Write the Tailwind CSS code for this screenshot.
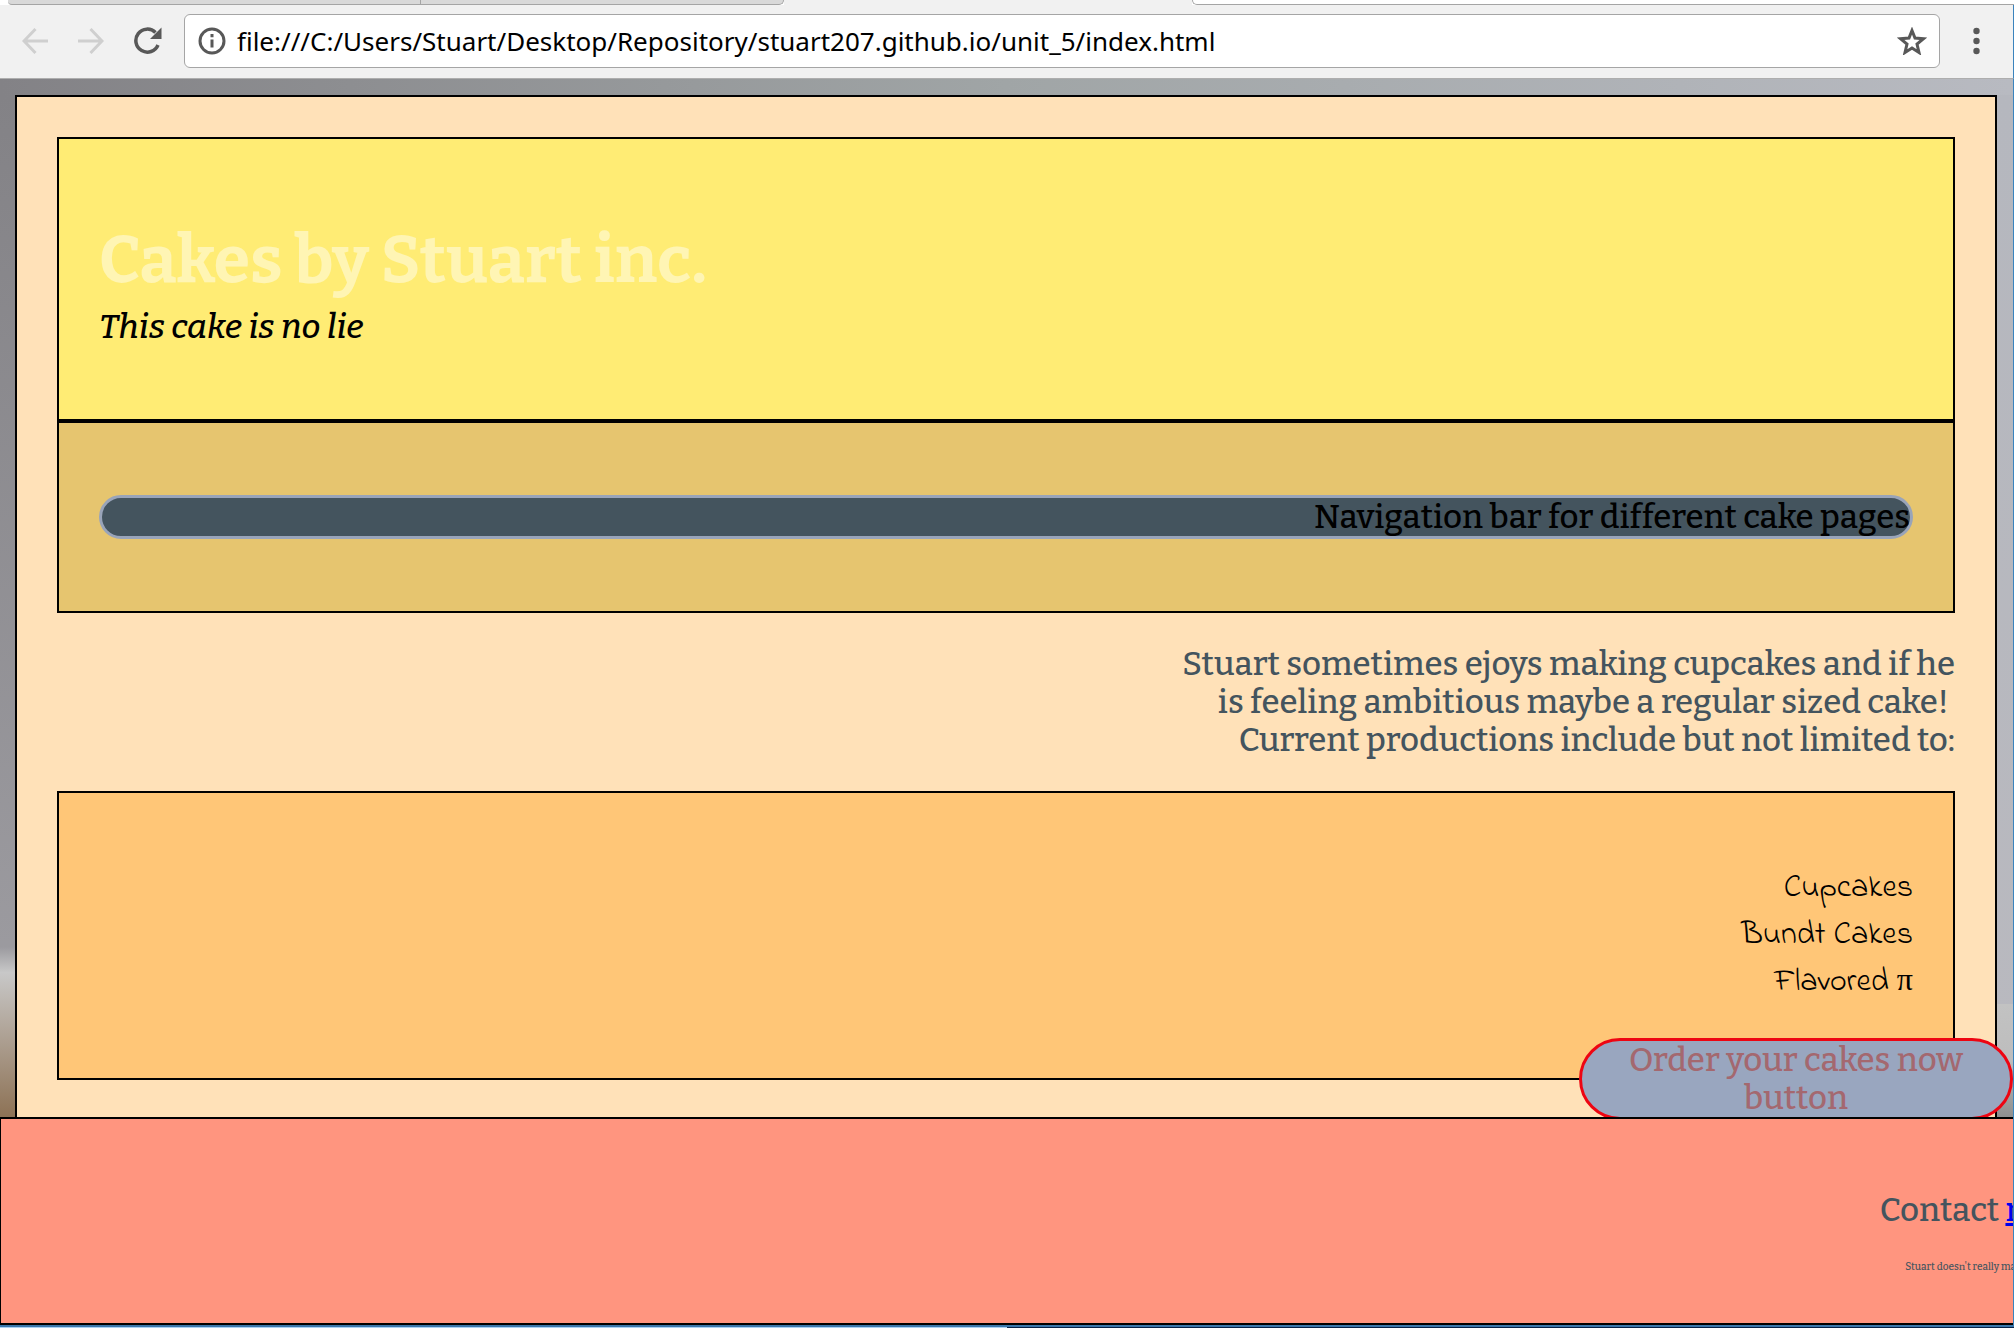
<!DOCTYPE html>
<html lang="en">
<head>
<meta charset="utf-8">
<title>Cakes by Stuart inc.</title>
<script src="https://cdn.jsdelivr.net/npm/@tailwindcss/browser@4"></script>
</head>
<body class="flex h-screen flex-col overflow-hidden bg-[#f1f1f1] font-['Bitter','DejaVu_Serif_Condensed','DejaVu_Serif',serif] text-[33px] leading-[38px] font-medium text-black [font-variant-ligatures:none]">

<!-- Tab strip -->
<div class="flex h-[5px] shrink-0 bg-white pl-2">
  <div class="w-[412px] rounded-bl-sm border-b border-[#a5a5a5] bg-[#d9d9d9]"></div>
  <div class="w-[364px] rounded-br-md border-b border-l border-r border-[#a5a5a5] bg-[#d9d9d9]"></div>
  <div class="w-[408px] bg-[#f1f1f1]"></div>
  <div class="flex-1 rounded-bl-md border-b border-l border-[#a5a5a5] bg-white"></div>
</div>

<!-- Toolbar -->
<header class="flex h-[74px] shrink-0 items-center border-r border-b border-b-[#aeaeae] border-r-[#3a83bd] pb-[2px] pl-[22px] pr-[33px]">
  <button type="button" aria-label="Back" class="mr-[30px]">
    <svg class="h-7 w-[26px]" viewBox="0 0 26 28" fill="none" stroke="#cfcfcf" stroke-width="3"><path d="M26 14H2M13.500 2L2 14l11.500 12"/></svg>
  </button>
  <button type="button" aria-label="Forward" class="mr-[30px]">
    <svg class="h-7 w-[26px]" viewBox="0 0 26 28" fill="none" stroke="#cfcfcf" stroke-width="3"><path d="M0 14h24M12.500 2L24 14 12.500 26"/></svg>
  </button>
  <button type="button" aria-label="Reload" class="mr-[22px]">
    <svg class="h-7 w-7" viewBox="0 0 28 28" fill="none"><path d="M21.500 5.500A11.500 11.500 0 1 0 24 18" stroke="#585858" stroke-width="3.500"/><path d="M27.500 .5V12H16z" fill="#585858"/></svg>
  </button>
  <div class="flex h-[54px] flex-1 items-center rounded-md border border-[#a5a5a5] bg-white pr-3 pl-[13px]">
    <svg class="mr-[11px] h-7 w-7" viewBox="0 0 28 28" fill="none"><circle cx="14" cy="14" r="12" stroke="#585858" stroke-width="3"/><path d="M12.500 7h3v3.200h-3zM12.500 12.500h3v8h-3z" fill="#585858"/></svg>
    <input aria-label="Address" type="text" value="file:///C:/Users/Stuart/Desktop/Repository/stuart207.github.io/unit_5/index.html" class="h-10 min-w-0 flex-1 bg-transparent font-['Noto_Sans','Open_Sans',sans-serif] text-[26px] leading-10 font-normal outline-none">
    <button type="button" aria-label="Bookmark this page">
      <svg class="h-7 w-[30px]" viewBox="0 0 30 28" fill="none" stroke="#585858" stroke-width="3"><path d="M15 3.500l3 7.500 8.500 .7-6.500 5.400 2 8.400-7-4.500-7 4.500 2-8.400L3.500 11.700l8.500-.7z"/></svg>
    </button>
  </div>
  <button type="button" aria-label="Menu" class="ml-[33px]">
    <svg class="h-7 w-[7px]" viewBox="0 0 7 28" fill="#585858"><circle cx="3.500" cy="4" r="3.200"/><circle cx="3.500" cy="14" r="3.200"/><circle cx="3.500" cy="24" r="3.200"/></svg>
  </button>
</header>

<!-- Page -->
<div class="relative flex min-h-0 flex-1 flex-col border-r border-[#3a83bd] bg-linear-to-r from-[#838286] via-[#a0a5a6] to-[#b8bac1]">
  <main class="flex min-h-0 flex-1 pt-4">
    <div class="flex w-[15px] flex-col justify-end bg-linear-to-b from-[#838286] to-[#a09fa4]">
      <div class="h-[170px] bg-linear-to-b from-[#9b9a9f] via-[#c8c8c8] via-15% to-[#8d7255]"></div>
    </div>
    <div class="flex-1 border-2 border-b-0 border-black bg-[#ffe1b8] px-10 pt-10">
      <section class="border-2 border-black bg-[#ffec74] px-10 pt-[80px] pb-[73px]">
        <h1 class="mb-2 text-[66px] leading-[81px] font-bold text-[#fff5b4]">Cakes by Stuart inc.</h1>
        <p class="text-[34px] italic">This cake is no lie</p>
      </section>
      <nav class="border-2 border-black bg-[#e6c56f] px-10 py-[72px]">
        <p class="rounded-[22px] border-3 border-[#99a4b9] bg-[#44545e] text-right">Navigation bar for different cake pages</p>
      </nav>
      <p class="my-8 text-right text-[#44545e]">Stuart sometimes ejoys making cupcakes and if he<br>is feeling ambitious maybe a regular sized cake!&nbsp;<br>Current productions include but not limited to:</p>
      <ul class="border-2 border-black bg-[#ffc677] px-10 py-[72px] text-right font-['Indie_Flower','Lato',cursive] text-[32px] leading-[47px] font-normal">
        <li>Cupcakes</li>
        <li>Bundt Cakes</li>
        <li>Flavored <span class="font-['Liberation_Serif',serif] leading-none">π</span></li>
      </ul>
    </div>
    <div class="flex w-4 flex-col justify-end bg-linear-to-b from-[#b5b7be] to-[#b9b9bf]">
      <div class="h-[113px] bg-linear-to-b from-[#c2c2c2] via-[#bdbdbd] to-[#8f8f8f]"></div>
    </div>
  </main>

  <footer class="relative z-10 h-[208px] shrink-0 overflow-hidden border-y-2 border-l border-black bg-[#ff957f] whitespace-nowrap text-[#44545e]">
    <div class="-mr-[42px] flex flex-col items-end gap-[19px] pt-[72px]">
      <p>Contact <a href="#" class="text-[#0000ee] underline">me</a></p>
      <p class="text-[10px]">Stuart doesn't really make cakes</p>
    </div>
  </footer>

  <button type="button" class="absolute right-0 bottom-[205px] w-[434px] rounded-[41px] border-3 border-[#ee0512] bg-[#99a6bf] px-10 text-center text-[#a4686f]">Order your cakes now button</button>
</div>

<!-- Desktop edge below the window -->
<div class="flex h-[3px] shrink-0 border-t-2 border-[#3a77ab]">
  <div class="flex-1 bg-[#a8d0f2]"></div>
  <div class="flex-1 bg-[#06234a]"></div>
</div>
</body>
</html>
